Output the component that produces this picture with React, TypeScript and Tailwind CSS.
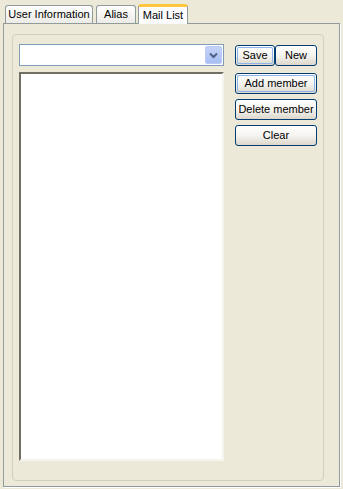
import React from "react";

const font = { fontFamily: "'Liberation Sans', Arial, sans-serif" };

function XpButton({ label, className = "", focused = false }: { label: string; className?: string; focused?: boolean }) {
  return (
    <div
      className={
        "relative flex h-[21px] items-center justify-center whitespace-nowrap rounded-[3px] border border-[#003C74] bg-gradient-to-b from-[#FFFFFF] via-[#F5F4F0] to-[#DCD7CC] text-[11px] leading-none text-black " +
        className
      }
    >
      {focused && (
        <div className="pointer-events-none absolute inset-[1px] rounded-[2px] border border-[#8FB4EA]" />
      )}
      <span className="relative">{label}</span>
    </div>
  );
}

export default function App() {
  return (
    <div className="h-[489px] w-[343px] bg-[#ECE9D8] text-black" style={font}>
      {/* tab strip */}
      <div className="flex h-[23px] items-end whitespace-nowrap pl-[5px]">
        <div className="mr-[3px] flex h-[18px] w-[88px] items-center justify-center rounded-t-[3px] border border-b-0 border-[#919B9C] bg-gradient-to-b from-[#FFFFFF] to-[#ECEBE6] text-[11px]">
          User Information
        </div>
        <div className="mr-[2px] flex h-[18px] w-[40px] items-center justify-center rounded-t-[3px] border border-b-0 border-[#919B9C] bg-gradient-to-b from-[#FFFFFF] to-[#ECEBE6] text-[11px]">
          Alias
        </div>
        <div className="relative -mb-px flex h-[20px] w-[50px] items-center justify-center rounded-t-[3px] border border-b-0 border-[#919B9C] border-t-[3px] border-t-[#FFC83C] bg-[#FCFCFE] text-[11px]">
          Mail List
        </div>
      </div>
      {/* panel */}
      <div className="mx-[3px] h-[464px] border border-[#919B9C] bg-[#ECE9D8] pl-[8px] pt-[10px] shadow-[1px_1px_0_#FFFFFF]">
        <div className="flex h-[447px] w-[312px] rounded-[4px] border border-[#D0D0BF] pl-[6px] pr-[6px] pt-[9px]">
          {/* left column */}
          <div className="flex w-[205px] flex-col">
            <div className="flex h-[22px] items-stretch border border-[#7F9DB9] bg-white p-[1px]">
              <div className="flex-1" />
              <div className="flex w-[17px] items-center justify-center rounded-[2px] border border-[#BBCAF5] bg-gradient-to-b from-[#C6D3F7] to-[#A8BFF5]">
                <svg width="9" height="7" viewBox="0 0 9 7">
                  <path d="M1 1.5 L4.5 5 L8 1.5" fill="none" stroke="#4D6185" strokeWidth="2" />
                </svg>
              </div>
            </div>
            <div className="mt-[6px] h-[389px] border-2 border-b-[#F5F4EF] border-l-[#716F64] border-r-[#F5F4EF] border-t-[#716F64] bg-white" />
          </div>
          {/* right column */}
          <div className="ml-[11px] flex w-[82px] flex-col pt-[1px]">
            <div className="flex">
              <XpButton label="Save" focused className="w-[40px]" />
              <XpButton label="New" className="w-[42px]" />
            </div>
            <XpButton label="Add member" focused className="mt-[7px] w-[82px]" />
            <XpButton label="Delete member" className="mt-[5px] w-[82px]" />
            <XpButton label="Clear" className="mt-[5px] w-[82px]" />
          </div>
        </div>
      </div>
    </div>
  );
}
